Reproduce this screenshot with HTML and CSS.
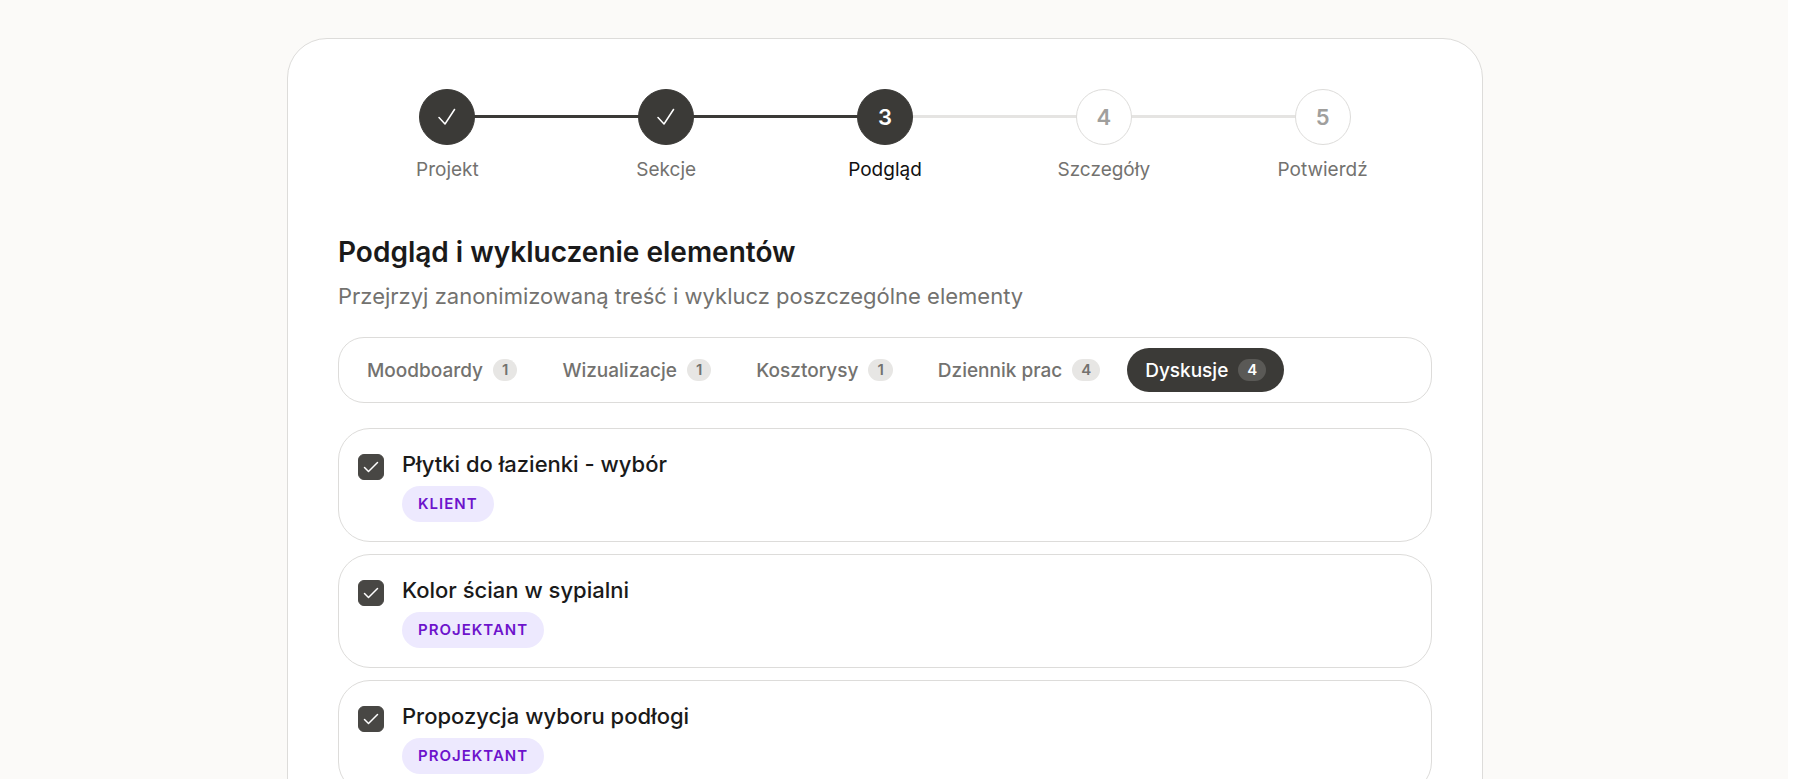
FILE: index.html
```html
<!DOCTYPE html>
<html lang="pl">
<head>
  <meta charset="UTF-8">
  <meta name="viewport" content="width=device-width, initial-scale=1.0">
  <title>Podgląd i wykluczenie elementów</title>
  <link rel="stylesheet" href="styles.css">
</head>
<body>
  <main class="page">
    <div class="wizard">
      <ol class="steps">
        <li class="step done">
          <span class="step-circle">
            <svg class="step-check" viewBox="0 0 18 18"><path d="M1 9.5 7 16 16.5 1.5"/></svg>
          </span>
          <span class="step-label">Projekt</span>
        </li>
        <li class="step done">
          <span class="step-circle">
            <svg class="step-check" viewBox="0 0 18 18"><path d="M1 9.5 7 16 16.5 1.5"/></svg>
          </span>
          <span class="step-label">Sekcje</span>
        </li>
        <li class="step current" aria-current="step">
          <span class="step-circle">3</span>
          <span class="step-label">Podgląd</span>
        </li>
        <li class="step">
          <span class="step-circle">4</span>
          <span class="step-label">Szczegóły</span>
        </li>
        <li class="step">
          <span class="step-circle">5</span>
          <span class="step-label">Potwierdź</span>
        </li>
      </ol>

      <h1 class="title">Podgląd i wykluczenie elementów</h1>
      <p class="subtitle">Przejrzyj zanonimizowaną treść i wyklucz poszczególne elementy</p>

      <div class="tabs" role="tablist">
        <button class="tab" role="tab">Moodboardy <span class="count">1</span></button>
        <button class="tab" role="tab">Wizualizacje <span class="count">1</span></button>
        <button class="tab" role="tab">Kosztorysy <span class="count">1</span></button>
        <button class="tab" role="tab">Dziennik prac <span class="count">4</span></button>
        <button class="tab active" role="tab" aria-selected="true">Dyskusje <span class="count">4</span></button>
      </div>

      <div class="items">
        <div class="item">
          <span class="checkbox">
            <input type="checkbox" id="item1" checked>
            <svg viewBox="0 0 16 16"><path d="M1.5 8.5 5.5 12.5 14.5 3.5"/></svg>
          </span>
          <div class="item-body">
            <label class="item-title" for="item1">Płytki do łazienki - wybór</label>
            <span class="badge">KLIENT</span>
          </div>
        </div>
        <div class="item">
          <span class="checkbox">
            <input type="checkbox" id="item2" checked>
            <svg viewBox="0 0 16 16"><path d="M1.5 8.5 5.5 12.5 14.5 3.5"/></svg>
          </span>
          <div class="item-body">
            <label class="item-title" for="item2">Kolor ścian w sypialni</label>
            <span class="badge">PROJEKTANT</span>
          </div>
        </div>
        <div class="item">
          <span class="checkbox">
            <input type="checkbox" id="item3" checked>
            <svg viewBox="0 0 16 16"><path d="M1.5 8.5 5.5 12.5 14.5 3.5"/></svg>
          </span>
          <div class="item-body">
            <label class="item-title" for="item3">Propozycja wyboru podłogi</label>
            <span class="badge">PROJEKTANT</span>
          </div>
        </div>
      </div>
    </div>
  </main>
</body>
</html>
```

FILE: styles.css
```css
* {
  box-sizing: border-box;
}

body {
  margin: 0;
  background: #fff;
  font-family: Inter, "Liberation Sans", sans-serif;
  color: #1a1a1a;
}

.page {
  min-height: 100vh;
  margin-right: 12px;
  padding: 38px 18px 0 0;
  background: #fbfaf8;
}

.wizard {
  max-width: 1196px;
  margin: 0 auto;
  padding: 50px 50px 60px;
  background: #fff;
  border: 1px solid #dddcda;
  border-radius: 40px;
}

/* steps */
.steps {
  display: flex;
  margin: 0 0 51px;
  padding: 0;
  list-style: none;
}

.step {
  position: relative;
  flex: 1;
  display: flex;
  flex-direction: column;
  align-items: center;
  gap: 12px;
}

/* connector to the next circle */
.step:not(:last-child)::after {
  content: "";
  position: absolute;
  top: 26px;
  left: 50%;
  width: 100%;
  height: 3px;
  background: #e5e4e2;
}

.step.done::after {
  background: #3b3a37;
}

.step-circle {
  position: relative;
  z-index: 1;
  display: flex;
  align-items: center;
  justify-content: center;
  width: 56px;
  height: 56px;
  border: 1px solid #dddcda;
  border-radius: 50%;
  background: #fff;
  color: #a09f9d;
  font-size: 22px;
  font-weight: 600;
}

.step.done .step-circle,
.step.current .step-circle {
  background: #3b3a37;
  border-color: #3b3a37;
  color: #fff;
}

.step-check {
  width: 18px;
  height: 18px;
  fill: none;
  stroke: #fff;
  stroke-width: 1.5;
  stroke-linecap: round;
  stroke-linejoin: round;
}

.step-label {
  font-size: 19px;
  line-height: 26px;
  color: #73726f;
}

.step.current .step-label {
  color: #111;
}

.title {
  margin: 0;
  font-size: 28px;
  line-height: 36px;
  font-weight: 600;
}

.subtitle {
  margin: 10px 0 25px;
  font-size: 22px;
  line-height: 32px;
  color: #73726f;
}

/* tabs */
.tabs {
  display: flex;
  gap: 9px;
  padding: 10px;
  border: 1px solid #dddcda;
  border-radius: 26px;
}

.tab {
  display: flex;
  align-items: center;
  gap: 10px;
  height: 44px;
  padding: 0 18px;
  border: none;
  border-radius: 22px;
  background: none;
  color: #73726f;
  font-family: inherit;
  font-size: 19px;
  font-weight: 500;
  cursor: pointer;
}

.tab.active {
  background: #3b3a37;
  color: #fff;
}

.count {
  padding: 0 9px;
  border-radius: 11px;
  background: #e7e6e4;
  font-size: 15px;
  line-height: 22px;
  font-weight: 600;
}

.tab.active .count {
  background: #5a5956;
}

/* items */
.items {
  display: flex;
  flex-direction: column;
  gap: 12px;
  margin-top: 25px;
}

.item {
  display: flex;
  gap: 18px;
  padding: 19px;
  border: 1px solid #dddcda;
  border-radius: 32px;
}

.checkbox {
  display: grid;
  place-items: center;
  width: 26px;
  height: 26px;
  margin-top: 6px;
}

.checkbox input,
.checkbox svg {
  grid-area: 1 / 1;
}

.checkbox input {
  appearance: none;
  width: 26px;
  height: 26px;
  margin: 0;
  border: 1px solid #c9c8c5;
  border-radius: 6px;
  background: #fff;
}

.checkbox input:checked {
  border-color: #484744;
  background: #484744;
}

.checkbox svg {
  width: 16px;
  height: 16px;
  fill: none;
  stroke: #fff;
  stroke-width: 1.5;
  stroke-linecap: round;
  stroke-linejoin: round;
  pointer-events: none;
}

.item-body {
  display: flex;
  flex-direction: column;
  align-items: flex-start;
  gap: 6px;
}

.item-title {
  font-size: 22px;
  line-height: 32px;
  font-weight: 500;
}

.badge {
  padding: 0 16px;
  border-radius: 18px;
  background: #ede9fe;
  color: #6d14cc;
  font-size: 15px;
  line-height: 36px;
  font-weight: 600;
  letter-spacing: 1px;
}
```
